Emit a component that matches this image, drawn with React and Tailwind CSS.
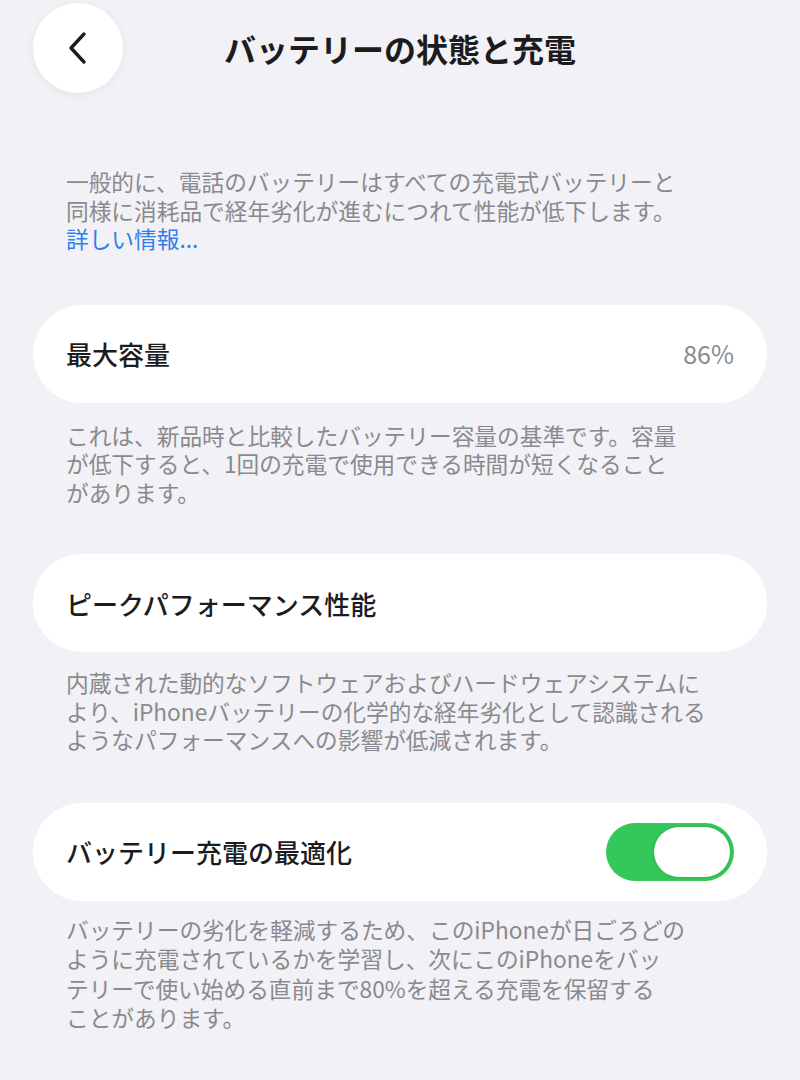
import React from 'react';

const FONT = { fontFamily: '"Noto Sans CJK JP", "Noto Sans", sans-serif' };

// Lines are broken by hand so wrapping stays the same as on the device
const Note = ({ lines, className = '' }) => (
  <p className={`whitespace-nowrap px-[33px] text-[22.7px] leading-[28.5px] text-[#8a8a8e] ${className}`}>
    {lines.map((l, i) => (
      <React.Fragment key={i}>
        {i > 0 && <br />}
        {l}
      </React.Fragment>
    ))}
  </p>
);

const Row = ({ label, children }) => (
  <div className="flex h-[98px] items-center justify-between rounded-full bg-white px-[33px]">
    <span className="text-[26px] font-medium text-[#1c1c1e]">{label}</span>
    {children}
  </div>
);

const Toggle = ({ on }) => (
  <div className={`flex h-[58px] w-[128px] items-center rounded-full p-[4px] ${on ? 'justify-end bg-[#34c759]' : 'justify-start bg-[#e5e5ea]'}`}>
    <div className="h-[50px] w-[76px] rounded-full bg-white shadow-[0_0_3px_rgba(0,80,20,0.25)]" />
  </div>
);

export default function App() {
  return (
    <div style={FONT} className="min-h-[1080px] w-full bg-[#f1f1f6] px-[33px] pt-[3px]">
      <header className="grid h-[90px] grid-cols-[90px_1fr_90px] items-center">
        <button className="flex h-[90px] w-[90px] items-center justify-center rounded-full bg-white shadow-[0_2px_10px_rgba(0,0,0,0.06)]">
          <svg width="24" height="34" viewBox="0 0 24 34" fill="none">
            <path d="M18 3 L5 17 L18 31" stroke="#1c1c1e" strokeWidth="3.4" strokeLinecap="round" strokeLinejoin="round" />
          </svg>
        </button>
        <h1 className="text-center text-[32px] font-bold leading-none text-[#1c1c1e]">
          バッテリーの状態と充電
        </h1>
        <div />
      </header>

      <p className="whitespace-nowrap px-[33px] pt-[75px] text-[22.7px] leading-[28.5px] text-[#8a8a8e]">
        一般的に、電話のバッテリーはすべての充電式バッテリーと
        <br />
        同様に消耗品で経年劣化が進むにつれて性能が低下します。
        <br />
        <a className="text-[#2f80ed]">詳しい情報...</a>
      </p>

      <div className="mt-[51px]">
        <Row label="最大容量">
          <span className="text-[25px] text-[#8a8a8e]">86%</span>
        </Row>
        <Note
          className="pt-[19px]"
          lines={[
            'これは、新品時と比較したバッテリー容量の基準です。容量',
            'が低下すると、1回の充電で使用できる時間が短くなること',
            'があります。',
          ]}
        />
      </div>

      <div className="mt-[47px]">
        <Row label="ピークパフォーマンス性能" />
        <Note
          className="pt-[17px]"
          lines={[
            '内蔵された動的なソフトウェアおよびハードウェアシステムに',
            'より、iPhoneバッテリーの化学的な経年劣化として認識される',
            'ようなパフォーマンスへの影響が低減されます。',
          ]}
        />
      </div>

      <div className="mt-[48px]">
        <Row label="バッテリー充電の最適化">
          <Toggle on />
        </Row>
        <Note
          className="pt-[14px] leading-[29.5px]"
          lines={[
            'バッテリーの劣化を軽減するため、このiPhoneが日ごろどの',
            'ように充電されているかを学習し、次にこのiPhoneをバッ',
            'テリーで使い始める直前まで80%を超える充電を保留する',
            'ことがあります。',
          ]}
        />
      </div>
    </div>
  );
}
